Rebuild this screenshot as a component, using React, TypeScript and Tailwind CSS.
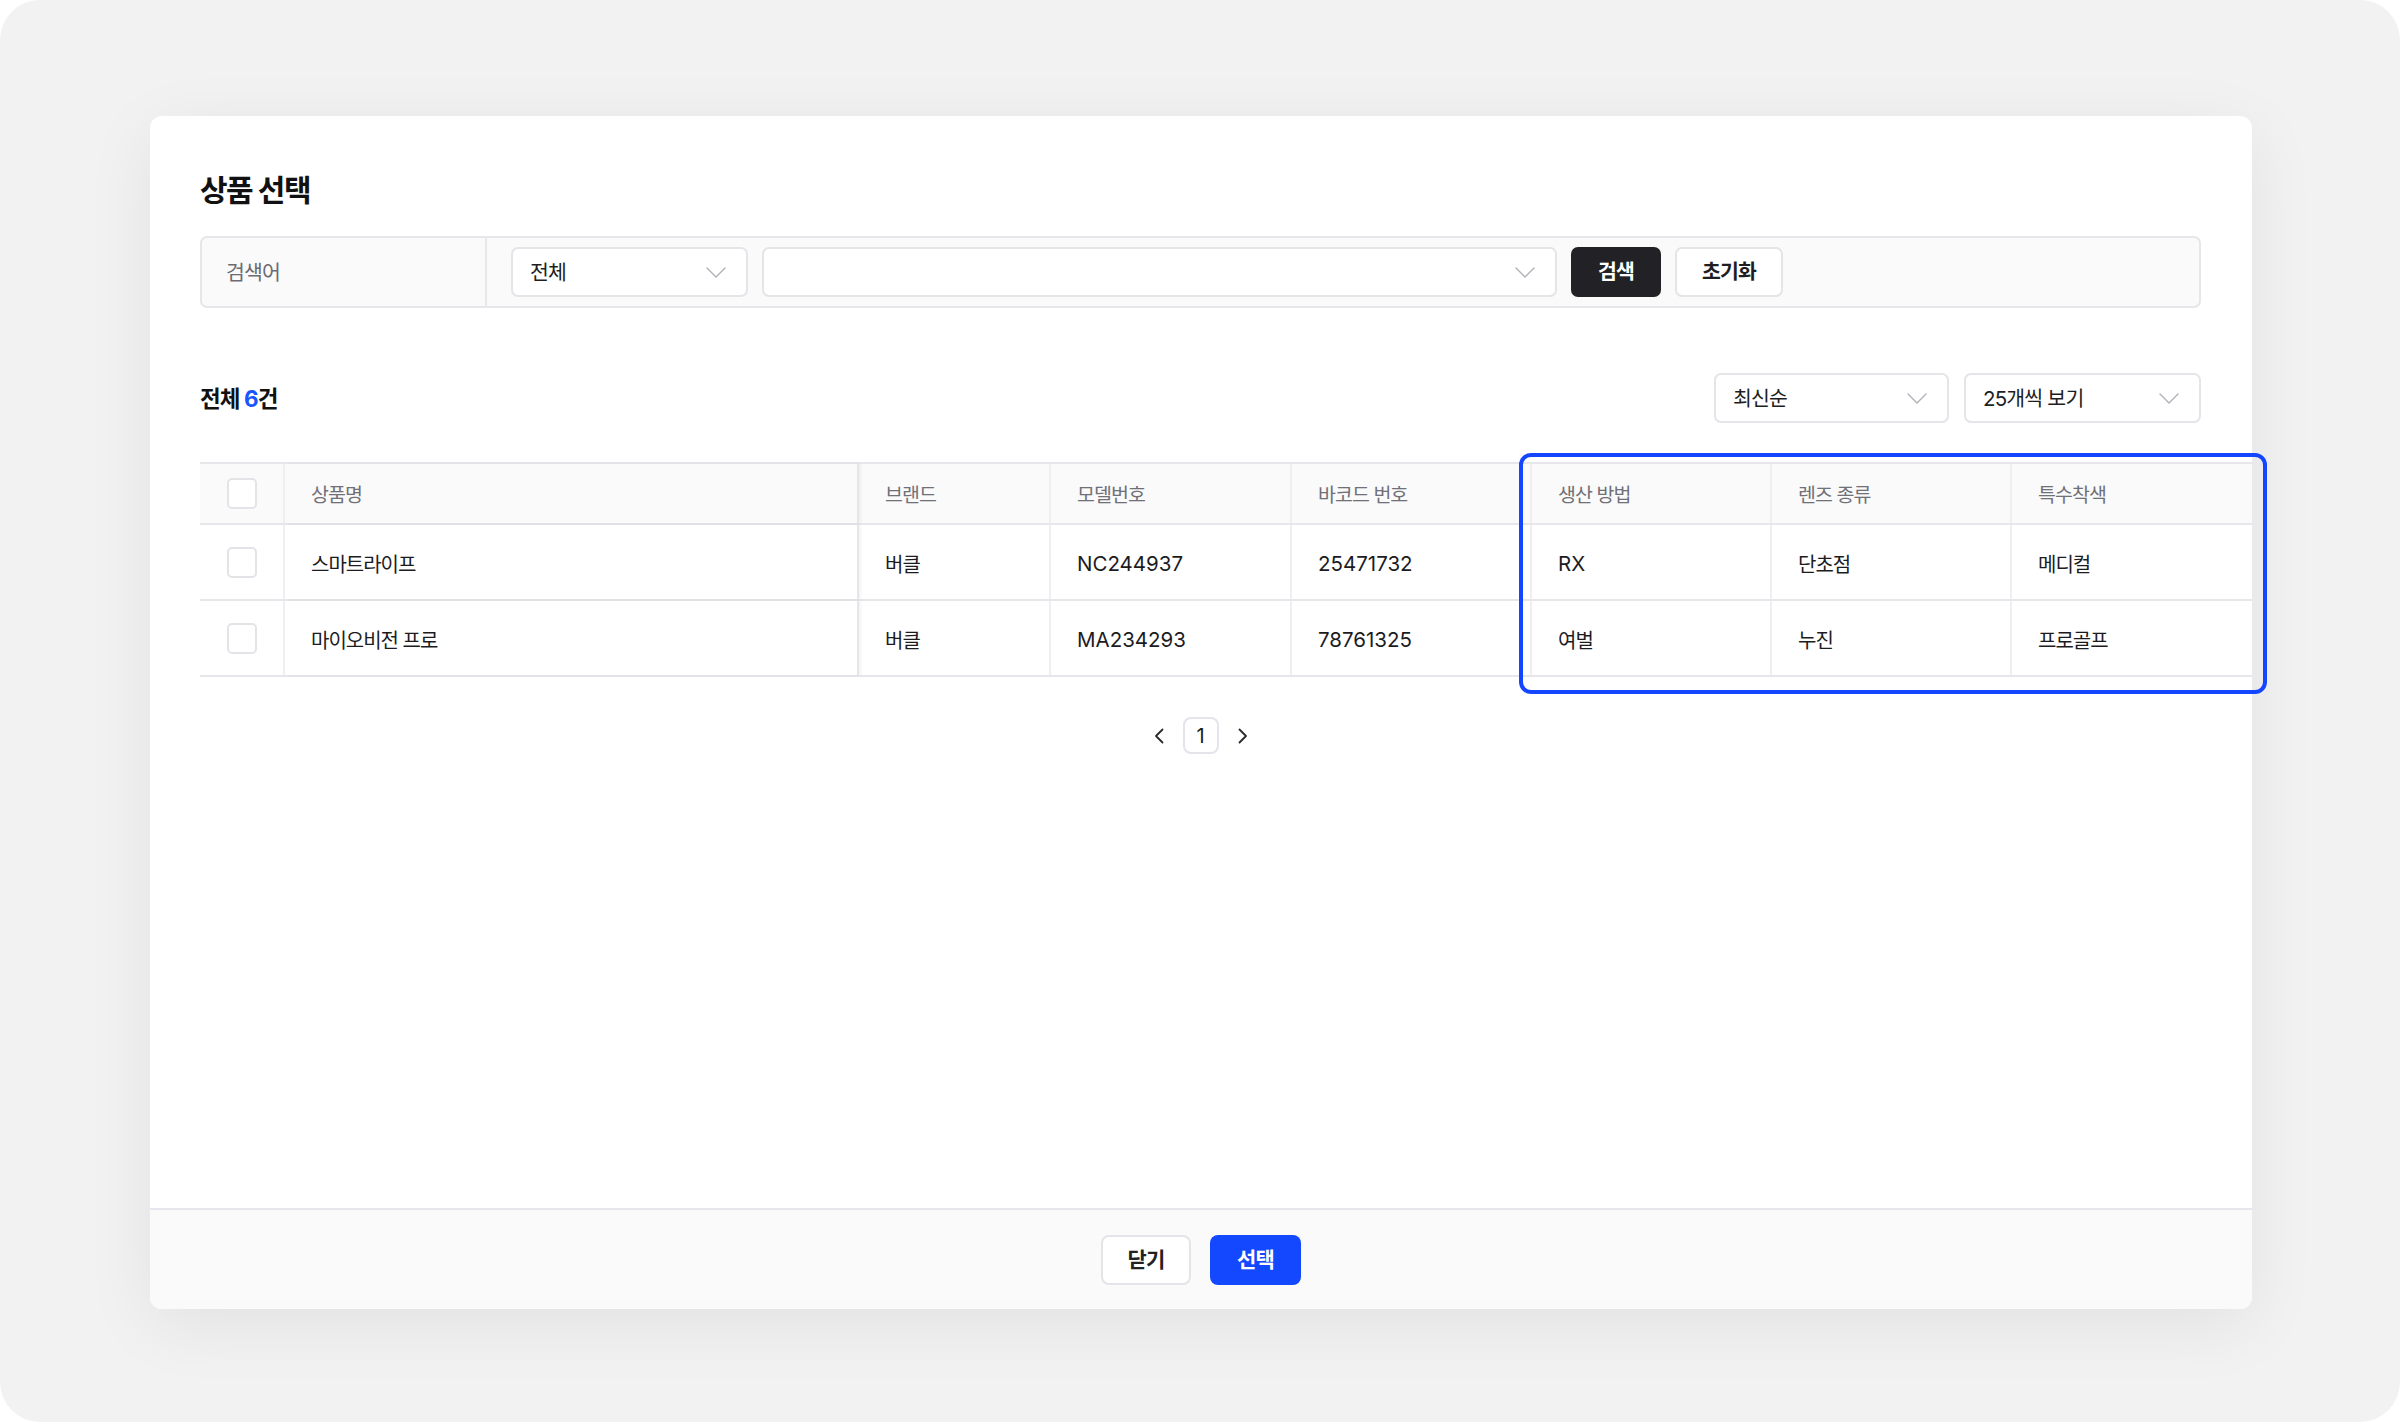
import React from "react";

const Chevron = () => (
  <svg width="20" height="11" viewBox="0 0 20 11" fill="none">
    <path d="M1 1L10 10L19 1" stroke="#b0b0b8" strokeWidth="1.4" strokeLinecap="round" strokeLinejoin="round" />
  </svg>
);

const Select = ({ label, w }: { label: string; w: string }) => (
  <div className={`${w} h-[50px] shrink-0 bg-white border-2 border-[#e4e4e9] rounded-[7px] flex items-center justify-between pl-[17px] pr-[20px]`}>
    <span className="pt-[2px] text-[20.5px] text-[#1e1e22] tracking-[-0.04em]">{label}</span>
    <Chevron />
  </div>
);

const Checkbox = () => <div className="w-[30px] h-[31px] rounded-[5px] border-2 border-[#e3e3e8] bg-white" />;

const cols = "grid grid-cols-[85px_574px_192px_241px_240px_240px_240px_240px]";

const headers = ["상품명", "브랜드", "모델번호", "바코드 번호", "생산 방법", "렌즈 종류", "특수착색"];

const rows = [
  ["스마트라이프", "버클", "NC244937", "25471732", "RX", "단초점", "메디컬"],
  ["마이오비전 프로", "버클", "MA234293", "78761325", "여벌", "누진", "프로골프"],
];

const isLatin = (s: string) => /^[A-Z0-9]+$/.test(s);

export default function App() {
  return (
    <div className="w-[2400px] h-[1422px] bg-white font-[family-name:Inter,'Noto_Sans_CJK_KR',sans-serif]">
      <div className="w-full h-full rounded-[40px] bg-[#f2f2f2] pt-[116px] pl-[150px]">
        <div className="w-[2102px] h-[1193px] bg-white rounded-[12px] shadow-[0_16px_70px_rgba(0,0,0,0.07)] flex flex-col">
          <div className="flex-1 pl-[50px] pr-[51px] pt-[54px]">
            <h1 className="h-[40px] leading-[40px] text-[30px] font-bold text-[#111] tracking-[-0.05em]">상품 선택</h1>

            <div className="mt-[26px] h-[72px] border-2 border-[#e6e6eb] rounded-[7px] bg-[#fafafa] flex">
              <div className="w-[285px] border-r-2 border-[#e6e6eb] flex items-center pl-[24px]">
                <span className="pt-[2px] text-[20.5px] text-[#6b6b73] tracking-[-0.04em]">검색어</span>
              </div>
              <div className="flex items-center gap-[14px] pl-[24px]">
                <Select label="전체" w="w-[237px]" />
                <Select label="" w="w-[795px]" />
                <button className="w-[90px] h-[50px] rounded-[7px] bg-[#222226] text-white text-[20.5px] font-bold tracking-[-0.04em]">검색</button>
                <button className="w-[108px] h-[50px] rounded-[7px] bg-white border-2 border-[#e4e4e9] text-[#1e1e22] text-[20.5px] font-bold tracking-[-0.04em]">초기화</button>
              </div>
            </div>

            <div className="mt-[65px] h-[50px] flex items-center justify-between">
              <div className="pt-[2px] text-[22.5px] font-bold text-[#111] tracking-[-0.04em]">
                전체 <span className="text-[#1a56ff]">6</span>건
              </div>
              <div className="flex gap-[15px]">
                <Select label="최신순" w="w-[235px]" />
                <Select label="25개씩 보기" w="w-[237px]" />
              </div>
            </div>

            <div className="relative mt-[39px] mr-[-51px]">
              <div className="border-t-2 border-[#e6e6eb]">
                <div className={`${cols} h-[61px] bg-[#fafafa] border-b-2 border-[#e6e6eb]`}>
                  <div className="flex items-center justify-center border-r-2 border-[#efeff3]">
                    <Checkbox />
                  </div>
                  {headers.map((h, i) => (
                    <div
                      key={h}
                      className={`flex items-center pl-[26px] pt-[5px] text-[19.5px] text-[#707078] tracking-[-0.05em] ${
                        i === 0 ? "border-r-2 border-[#e6e6ea] shadow-[2px_0_3px_rgba(0,0,0,0.05)]" : i < 6 ? "border-r-2 border-[#efeff3]" : ""
                      }`}
                    >
                      {h}
                    </div>
                  ))}
                </div>
                {rows.map((r, ri) => (
                  <div key={ri} className={`${cols} h-[76px] border-b-2 border-[#e6e6eb]`}>
                    <div className="flex items-center justify-center border-r-2 border-[#efeff3]">
                      <Checkbox />
                    </div>
                    {r.map((c, i) => (
                      <div
                        key={i}
                        className={`flex items-center pl-[26px] pt-[5px] text-[#1c1c1f] ${
                          isLatin(c) ? "text-[20.5px]" : "text-[20px] tracking-[-0.05em]"
                        } ${i === 0 ? "border-r-2 border-[#e6e6ea] shadow-[2px_0_3px_rgba(0,0,0,0.05)]" : i < 6 ? "border-r-2 border-[#efeff3]" : ""}`}
                      >
                        {c}
                      </div>
                    ))}
                  </div>
                ))}
              </div>
              <div className="absolute left-[1319px] top-[-9px] w-[748px] h-[241px] border-[4px] border-[#1446ff] rounded-[12px] pointer-events-none" />
            </div>

            <div className="mt-[40px] flex items-center justify-center gap-[19px]">
              <svg width="10" height="16" viewBox="0 0 10 16" fill="none">
                <path d="M8.5 1.5L2 8L8.5 14.5" stroke="#2a2a2e" strokeWidth="1.8" strokeLinecap="round" strokeLinejoin="round" />
              </svg>
              <div className="w-[36px] h-[37px] rounded-[8px] border-2 border-[#e4e4ea] flex items-center justify-center text-[20px] text-[#1c1c1f]">1</div>
              <svg width="10" height="16" viewBox="0 0 10 16" fill="none">
                <path d="M1.5 1.5L8 8L1.5 14.5" stroke="#2a2a2e" strokeWidth="1.8" strokeLinecap="round" strokeLinejoin="round" />
              </svg>
            </div>
          </div>

          <div className="h-[101px] shrink-0 border-t-2 border-[#e6e6ee] bg-[#fafafa] rounded-b-[12px] flex items-center justify-center gap-[19px]">
            <button className="w-[90px] h-[50px] rounded-[8px] bg-white border-2 border-[#e4e4e9] text-[21px] font-bold text-[#222] tracking-[-0.04em]">닫기</button>
            <button className="w-[91px] h-[50px] rounded-[8px] bg-[#1448ff] text-[21px] font-bold text-white tracking-[-0.04em]">선택</button>
          </div>
        </div>
      </div>
    </div>
  );
}
